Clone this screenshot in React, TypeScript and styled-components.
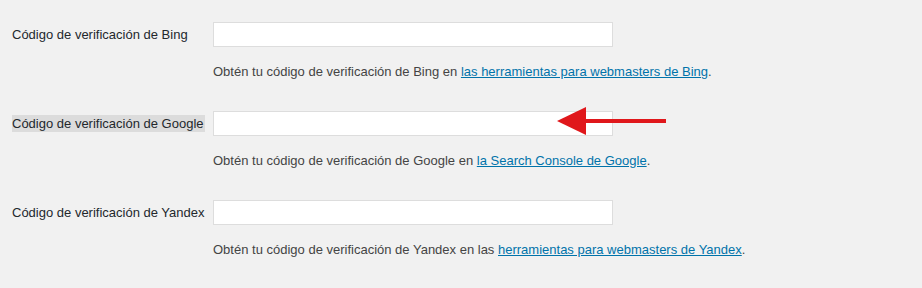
import React from "react";
import styled, { createGlobalStyle } from "styled-components";

const GlobalStyle = createGlobalStyle`
  html, body {
    margin: 0;
    padding: 0;
    background: #f1f1f1;
  }
  body {
    font-family: "Liberation Sans", Arial, sans-serif;
    font-size: 13px;
    color: #444444;
  }
`;

const FormTable = styled.div`
  display: grid;
  grid-template-columns: 201px 1fr;
  row-gap: 30px;
  padding: 22px 0 0 12px;
  width: 922px;
  height: 288px;
  box-sizing: border-box;
  align-content: start;
  overflow: hidden;
`;

const LabelCell = styled.div`
  height: 25px;
  display: flex;
  align-items: center;
`;

const Label = styled.label<{ $highlight?: boolean }>`
  color: #23282d;
  line-height: 17px;
  padding-right: 1px;
  white-space: nowrap;
  background: ${(p) => (p.$highlight ? "#dcdcdc" : "transparent")};
`;

const FieldCell = styled.div`
  position: relative;
  display: flex;
  flex-direction: column;
  align-items: flex-start;
`;

const TextInput = styled.input`
  width: 400px;
  height: 25px;
  box-sizing: border-box;
  border: 1px solid #dddddd;
  background: #ffffff;
  margin: 0;
  padding: 0 6px;
  outline: none;
`;

const Description = styled.p`
  margin: 16px 0 0;
  line-height: 18px;
  color: #444444;
  white-space: nowrap;
`;

const Link = styled.a`
  color: #0073aa;
  text-decoration: underline;
`;

const Arrow = styled.svg`
  position: absolute;
  left: 344px;
  top: -4px;
`;

interface RowProps {
  name: string;
  highlight?: boolean;
  children: React.ReactNode;
  arrow?: boolean;
}

const Row: React.FC<RowProps> = ({ name, highlight, children, arrow }) => (
  <>
    <LabelCell>
      <Label $highlight={highlight}>Código de verificación de {name}</Label>
    </LabelCell>
    <FieldCell>
      <TextInput type="text" />
      {arrow && (
        <Arrow width="110" height="30" viewBox="0 0 110 30">
          <polygon points="0,14 29,0 29,28" fill="#e0171b" />
          <rect x="27" y="12" width="82" height="4" fill="#e0171b" />
        </Arrow>
      )}
      <Description>{children}</Description>
    </FieldCell>
  </>
);

const App: React.FC = () => {
  return (
    <>
      <GlobalStyle />
      <FormTable>
        <Row name="Bing">
          Obtén tu código de verificación de Bing en{" "}
          <Link href="#">las herramientas para webmasters de Bing</Link>.
        </Row>
        <Row name="Google" highlight arrow>
          Obtén tu código de verificación de Google en{" "}
          <Link href="#">la Search Console de Google</Link>.
        </Row>
        <Row name="Yandex">
          Obtén tu código de verificación de Yandex en las{" "}
          <Link href="#">herramientas para webmasters de Yandex</Link>.
        </Row>
      </FormTable>
    </>
  );
};

export default App;
